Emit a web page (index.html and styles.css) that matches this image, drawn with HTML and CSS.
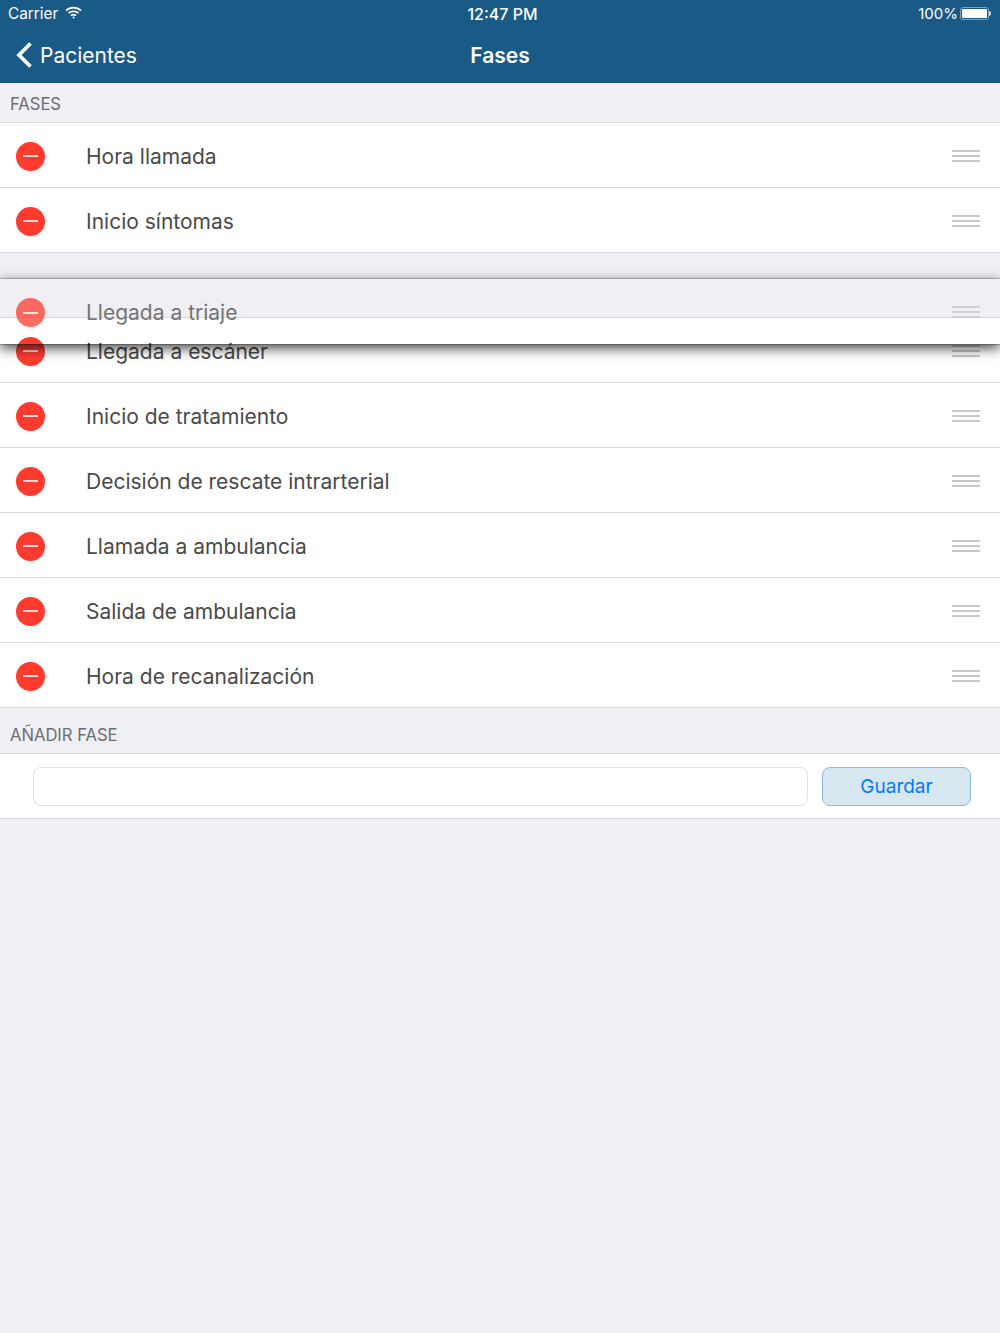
FILE: index.html
```html
<!DOCTYPE html>
<html lang="es">
<head>
    <meta charset="UTF-8">
    <meta name="viewport" content="width=device-width, initial-scale=1.0">
    <title>Fases</title>
    <link rel="stylesheet" href="styles.css">
</head>
<body>
    <header class="top-bar">
        <div class="status-bar">
            <div class="status-left">
                <span>Carrier</span>
                <svg class="wifi" width="17" height="13" viewBox="0 0 17 13" fill="none" stroke="#fff" stroke-width="1.7">
                    <path d="M1 4.6C5.3 .6 11.7 .6 16 4.6"/>
                    <path d="M3.5 7.2C6.4 4.6 10.6 4.6 13.5 7.2"/>
                    <path d="M6 9.7C7.5 8.5 9.5 8.5 11 9.7"/>
                    <circle cx="8.5" cy="11.6" r="1" fill="#fff" stroke="none"/>
                </svg>
            </div>
            <div class="status-time">12:47 PM</div>
            <div class="status-right">
                <span>100%</span>
                <div class="battery"><div class="battery-level"></div></div>
            </div>
        </div>
        <nav class="nav-bar">
            <a class="back-link">
                <svg width="18" height="28" viewBox="0 0 18 28" fill="none" stroke="#fff" stroke-width="3.8">
                    <path d="M15.5 2.5L4 14L15.5 25.5"/>
                </svg>
                <span>Pacientes</span>
            </a>
            <div class="nav-title">Fases</div>
        </nav>
    </header>

    <div class="section-title first">FASES</div>
    <div class="list">
        <!-- Filas -->
        <div class="row"><span class="del"></span><span class="row-text">Hora llamada</span><span class="handle"><i></i><i></i><i></i></span></div>
        <div class="row"><span class="del"></span><span class="row-text">Inicio síntomas</span><span class="handle"><i></i><i></i><i></i></span></div>
        <div class="row-gap"></div>
        <div class="row"><span class="del"></span><span class="row-text">Llegada a escáner</span><span class="handle"><i></i><i></i><i></i></span></div>
        <div class="row"><span class="del"></span><span class="row-text">Inicio de tratamiento</span><span class="handle"><i></i><i></i><i></i></span></div>
        <div class="row"><span class="del"></span><span class="row-text">Decisión de rescate intrarterial</span><span class="handle"><i></i><i></i><i></i></span></div>
        <div class="row"><span class="del"></span><span class="row-text">Llamada a ambulancia</span><span class="handle"><i></i><i></i><i></i></span></div>
        <div class="row"><span class="del"></span><span class="row-text">Salida de ambulancia</span><span class="handle"><i></i><i></i><i></i></span></div>
        <div class="row"><span class="del"></span><span class="row-text">Hora de recanalización</span><span class="handle"><i></i><i></i><i></i></span></div>

        <!-- Fila que se esta arrastrando -->
        <div class="row dragging"><span class="del"></span><span class="row-text">Llegada a triaje</span><span class="handle"><i></i><i></i><i></i></span></div>
    </div>

    <div class="section-title">AÑADIR FASE</div>
    <div class="add-row">
        <input class="add-input" type="text">
        <button class="save-button">Guardar</button>
    </div>
</body>
</html>
```

FILE: styles.css
```css
* {
    box-sizing: border-box;
}
body {
    margin: 0;
    background-color: #efeff4;
    font-family: 'Inter', 'Roboto', sans-serif;
    color: #4a4a4a;
}
.top-bar {
    height: 83px;
    background: #1a5a87;
    color: #fff;
    border-bottom: 1px solid #175380;
}
.status-bar {
    display: grid;
    grid-template-columns: 1fr auto 1fr;
    align-items: center;
    height: 27px;
    padding: 0 8px 0 8px;
    font-size: 15.3px;
}
.status-left {
    display: flex;
    align-items: center;
    gap: 7px;
}
.wifi {
    margin-top: -3px;
}
.status-time {
    font-size: 16px;
    font-weight: 500;
    margin-left: 5px;
}
.status-right {
    display: flex;
    align-items: center;
    justify-content: flex-end;
    gap: 2px;
    padding-right: 3px;
    font-size: 15px;
}
.battery {
    position: relative;
    width: 29px;
    height: 13px;
    padding: 1px;
    border: 1px solid #7ea3bd;
    border-radius: 3px;
}
.battery::after {
    content: "";
    position: absolute;
    right: -3px;
    top: 3px;
    width: 2px;
    height: 5px;
    background: #c6d6e1;
    border-radius: 0 2px 2px 0;
}
.battery-level {
    height: 100%;
    background: #fff;
    border-radius: 1px;
}
.nav-bar {
    display: grid;
    grid-template-columns: 1fr auto 1fr;
    align-items: center;
    height: 55px;
    padding: 0 15px;
}
.back-link {
    display: flex;
    align-items: center;
    gap: 7px;
    font-size: 21px;
}
.back-link span,
.nav-title {
    padding-top: 1px;
}
.nav-title {
    font-size: 21px;
    font-weight: 600;
}
.section-title {
    display: flex;
    align-items: center;
    height: 46px;
    padding: 9px 10px 0;
    font-size: 16.6px;
    color: #6d6d72;
    border-bottom: 1px solid #d9d9de;
}
.section-title.first {
    height: 40px;
    padding-top: 3px;
}
.list {
    position: relative;
}
.row {
    display: flex;
    align-items: center;
    height: 65px;
    padding: 0 20px 0 16px;
    background: #fff;
    border-bottom: 1px solid #d9d9de;
}
.row-gap {
    height: 65px;
    border-bottom: 1px solid #d9d9de;
}
.del {
    display: flex;
    align-items: center;
    justify-content: center;
    flex: none;
    width: 29px;
    height: 29px;
    margin-top: 2px;
    border-radius: 50%;
    background: #ff3b30;
    box-shadow: 0 1px 2px rgba(0, 0, 0, 0.06);
}
.del::before {
    content: "";
    width: 15px;
    height: 2px;
    background: #ffd9d6;
}
.row-text {
    flex: 1;
    margin-left: 41px;
    padding-top: 2px;
    font-size: 21px;
}
.handle {
    display: flex;
    flex-direction: column;
    gap: 3px;
    width: 28px;
    margin-top: 1px;
}
.handle i {
    display: block;
    height: 2px;
    background: #c7c7cc;
}
.dragging {
    position: absolute;
    top: 156px;
    left: 0;
    right: 0;
    background: transparent;
    border-bottom: 0;
    box-shadow: 0 4px 12px rgba(0, 0, 0, 0.75), 0 0 0 1px rgba(0, 0, 0, 0.2);
}
.dragging .del,
.dragging .row-text,
.dragging .handle {
    opacity: 0.75;
}
.add-row {
    display: flex;
    align-items: center;
    gap: 14px;
    height: 65px;
    padding: 0 29px 0 33px;
    background: #fff;
    border-bottom: 1px solid #d9d9de;
}
.add-input {
    flex: 1;
    height: 39px;
    border: 1px solid #e2e2e2;
    border-radius: 8px;
    background: #fff;
}
.save-button {
    width: 149px;
    height: 39px;
    border: 1px solid #8fbad3;
    border-radius: 8px;
    background: #d7e7ef;
    color: #007aff;
    font-family: inherit;
    font-size: 19px;
}
```
